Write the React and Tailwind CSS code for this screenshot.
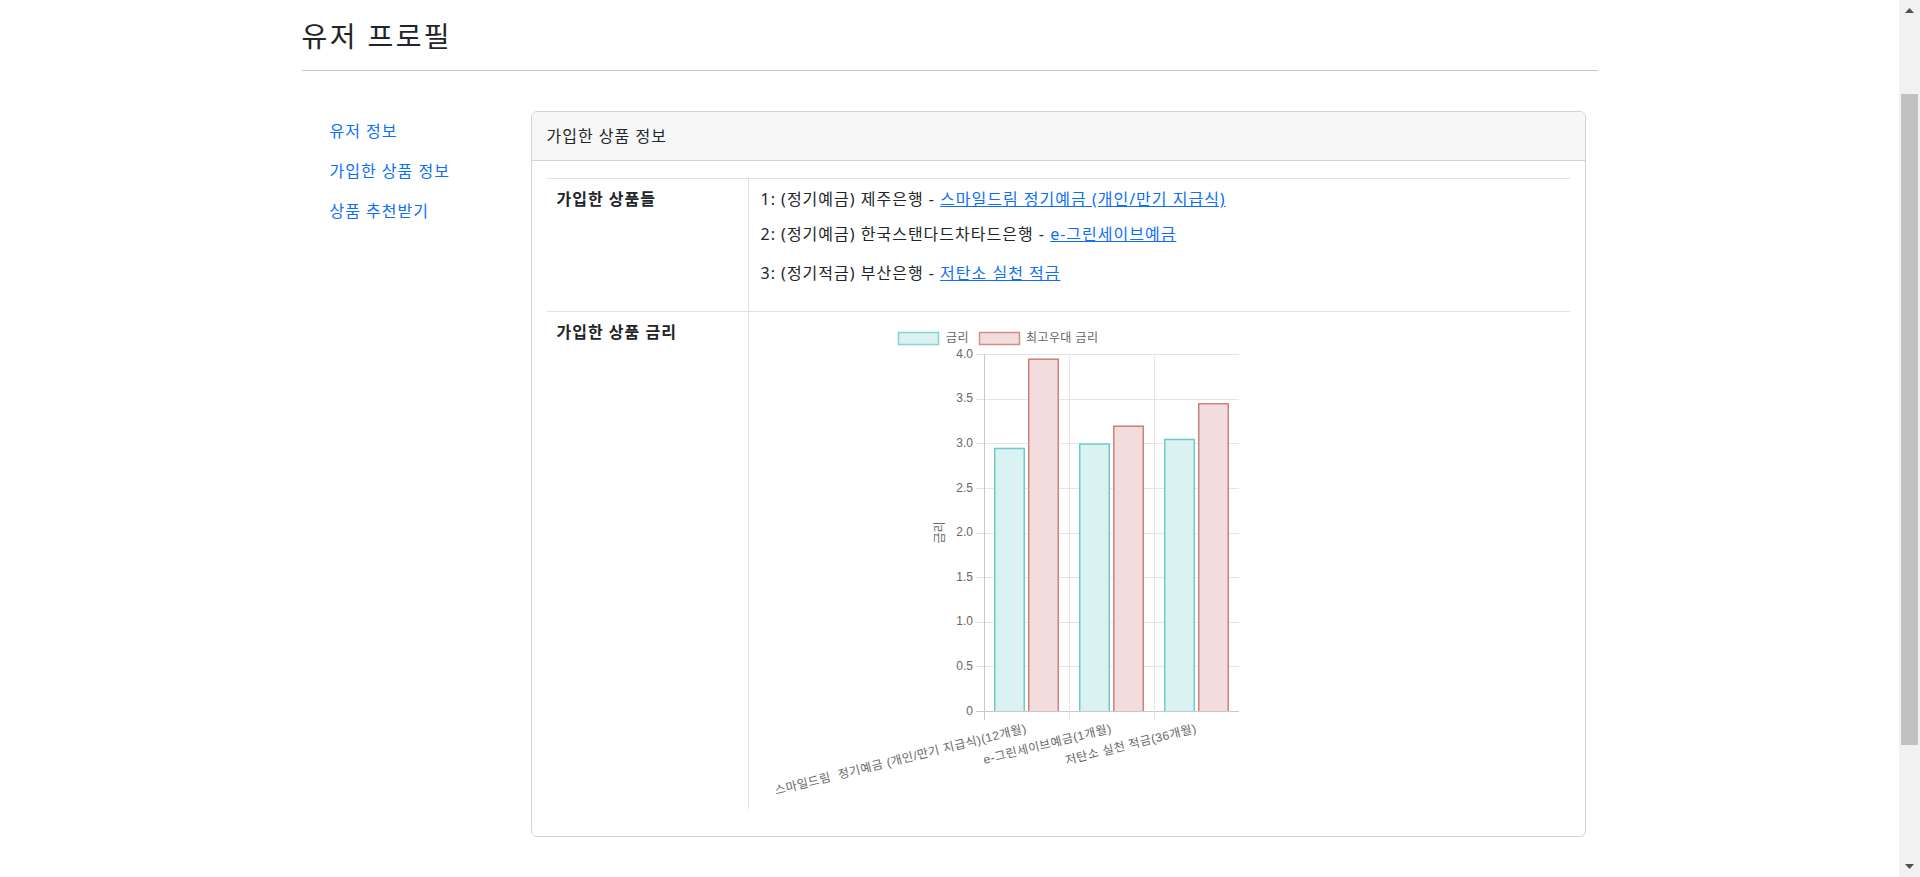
import React from 'react';

const Y0 = 390;
const U = 89.25;
const yv = (v) => Y0 - v * U;
const ticks = [0, 0.5, 1, 1.5, 2, 2.5, 3, 3.5, 4];
const fmt = (v) => (v === 0 ? '0' : v.toFixed(1));
const CF = "'Liberation Sans','Noto Sans CJK KR',sans-serif";

const bars = [
  { x: 233, v: 2.95, c: 'teal' },
  { x: 267, v: 3.95, c: 'red' },
  { x: 318, v: 3.0, c: 'teal' },
  { x: 352, v: 3.2, c: 'red' },
  { x: 403, v: 3.05, c: 'teal' },
  { x: 437, v: 3.45, c: 'red' },
];

const COL = {
  teal: { fill: '#dbf2f2', stroke: '#6fcaca' },
  red: { fill: '#f2dcdc', stroke: '#cf8080' },
};

const xLabels = [
  { x: 265.5, t: '스마일드림  정기예금 (개인/만기 지급식)(12개월)' },
  { x: 350.5, t: 'e-그린세이브예금(1개월)' },
  { x: 435.5, t: '저탄소 실천 적금(36개월)' },
];

function Chart() {
  return (
    <svg width="478" height="480" viewBox="0 0 478 480" className="block">
      {/* legend */}
      <rect x="137.5" y="11.5" width="40" height="12" fill="#dbf2f2" stroke="#86d3d3" strokeWidth="1.5" />
      <text x="185" y="18" fontSize="12" fill="#666" fontFamily={CF} letterSpacing="0.4" dominantBaseline="middle">금리</text>
      <rect x="218.5" y="11.5" width="40" height="12" fill="#f2dcdc" stroke="#d68c8c" strokeWidth="1.5" />
      <text x="265" y="18" fontSize="12" fill="#666" fontFamily={CF} letterSpacing="0.4" dominantBaseline="middle">최고우대 금리</text>

      {/* horizontal grid */}
      {ticks.map((v) => {
        const yy = Math.round(yv(v)) + 0.5;
        return (
          <line key={'h' + v} x1="215" x2="478" y1={yy} y2={yy} stroke={v === 0 ? '#c9c9c9' : '#e5e5e5'} strokeWidth="1" />
        );
      })}
      {/* vertical grid */}
      <line x1="308.5" x2="308.5" y1="33" y2="399" stroke="#e5e5e5" strokeWidth="1" />
      <line x1="393.5" x2="393.5" y1="33" y2="399" stroke="#e5e5e5" strokeWidth="1" />
      <line x1="223.5" x2="223.5" y1="33" y2="399" stroke="#c9c9c9" strokeWidth="1" />

      {/* y tick labels */}
      {ticks.map((v) => (
        <text key={'t' + v} x="212" y={yv(v) + 0.5} fontSize="12" fill="#666" fontFamily={CF} textAnchor="end" dominantBaseline="middle">
          {fmt(v)}
        </text>
      ))}

      {/* bars */}
      {bars.map((b, i) => {
        const top = yv(b.v);
        const c = COL[b.c];
        return (
          <g key={'b' + i}>
            <rect x={b.x} y={top} width="31" height={Y0 - top} fill={c.fill} />
            <path
              d={`M${b.x + 0.75} ${Y0} L${b.x + 0.75} ${top + 0.75} L${b.x + 30.25} ${top + 0.75} L${b.x + 30.25} ${Y0}`}
              fill="none"
              stroke={c.stroke}
              strokeWidth="1.5"
            />
          </g>
        );
      })}

      {/* y axis title */}
      <text transform="translate(180,211.5) rotate(-90)" fontSize="12" fill="#666" fontFamily={CF} textAnchor="middle" dominantBaseline="middle">
        금리
      </text>

      {/* x labels */}
      {xLabels.map((l, i) => (
        <text
          key={'x' + i}
          transform={`translate(${l.x},408) rotate(-14)`}
          fontSize="12"
          fill="#666"
          fontFamily={CF}
          letterSpacing="0.5"
          textAnchor="end"
          dominantBaseline="middle"
          className="whitespace-pre"
        >
          {l.t}
        </text>
      ))}
    </svg>
  );
}

function Scrollbar() {
  return (
    <div className="w-[21px] shrink-0 bg-[#f1f1f1] flex flex-col items-center">
      <div className="h-[21px] w-full flex items-center justify-center">
        <svg width="9" height="5" viewBox="0 0 9 5">
          <path d="M0 5 L4.5 0 L9 5 Z" fill="#505050" />
        </svg>
      </div>
      <div className="mt-[73px] h-[651px] w-[17px] bg-[#c1c1c1]" />
      <div className="flex-1" />
      <div className="h-[21px] w-full flex items-center justify-center">
        <svg width="9" height="5" viewBox="0 0 9 5">
          <path d="M0 0 L4.5 5 L9 0 Z" fill="#505050" />
        </svg>
      </div>
    </div>
  );
}

export default function App() {
  return (
    <div className="flex h-[877px] overflow-hidden bg-white text-[#212529] font-['Noto_Sans','Noto_Sans_CJK_KR',sans-serif]">
      <main className="flex-1 min-w-0">
        <div className="w-[1296px] mx-auto">
          <h3 className="pt-[19px] text-[28px] leading-[34px] font-normal tracking-[2.4px]">유저 프로필</h3>
          <div className="mt-[17px] h-px bg-[#cacaca]" />
          <div className="flex mt-[40px] items-start tracking-[1px]">
            <nav className="w-[229px] shrink-0 pl-[12px] flex flex-col">
              <a href="#" className="px-4 py-2 leading-6 text-[16px] text-[#0d6efd]">유저 정보</a>
              <a href="#" className="px-4 py-2 leading-6 text-[16px] text-[#0d6efd]">가입한 상품 정보</a>
              <a href="#" className="px-4 py-2 leading-6 text-[16px] text-[#0d6efd]">상품 추천받기</a>
            </nav>
            <section className="w-[1055px] border border-[#d3d3d3] rounded-[6px] overflow-hidden">
              <div className="bg-[#f7f7f7] border-b border-[#d3d3d3] px-[15px] py-3 leading-6 text-[16px]">
                가입한 상품 정보
              </div>
              <div className="px-[15px] pt-[17px] pb-[27px]">
                <div className="border-t border-[#dee2e6] flex">
                  <div className="w-[202px] shrink-0 border-r border-[#dee2e6] pl-[10px] pt-2 leading-6 text-[16px] font-bold">
                    가입한 상품들
                  </div>
                  <div className="flex-1 pl-[12px] pt-2 pb-[26px] text-[16px] leading-6">
                    <div>
                      1: (정기예금) 제주은행 - <a href="#" className="text-[#0d6efd] underline">스마일드림 정기예금 (개인/만기 지급식)</a>
                    </div>
                    <div className="mt-[11px]">
                      2: (정기예금) 한국스탠다드차타드은행 - <a href="#" className="text-[#0d6efd] underline">e-그린세이브예금</a>
                    </div>
                    <div className="mt-[15px]">
                      3: (정기적금) 부산은행 - <a href="#" className="text-[#0d6efd] underline">저탄소 실천 적금</a>
                    </div>
                  </div>
                </div>
                <div className="border-t border-[#dee2e6] flex">
                  <div className="w-[202px] shrink-0 border-r border-[#dee2e6] pl-[10px] pt-2 leading-6 text-[16px] font-bold">
                    가입한 상품 금리
                  </div>
                  <div className="flex-1 pl-[12px] pt-[9px] pb-2 tracking-normal">
                    <Chart />
                  </div>
                </div>
              </div>
            </section>
          </div>
        </div>
      </main>
      <Scrollbar />
    </div>
  );
}
